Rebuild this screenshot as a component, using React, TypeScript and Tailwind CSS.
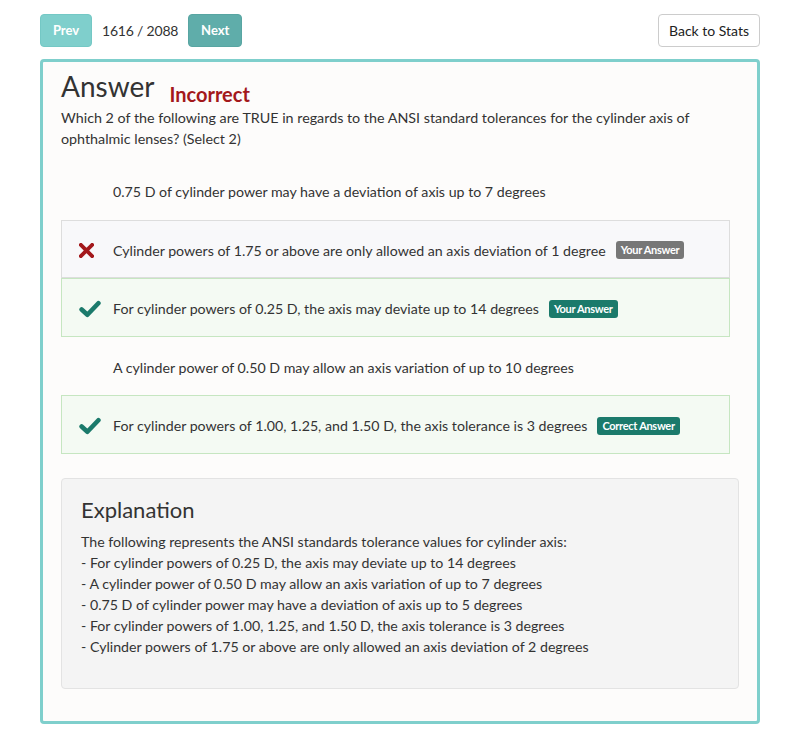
import React from "react";

type Option = {
  text: string;
  status?: "wrong" | "right";
  badge?: "your" | "yourRight" | "correct";
};

const options: Option[] = [
  { text: "0.75 D of cylinder power may have a deviation of axis up to 7 degrees" },
  {
    text: "Cylinder powers of 1.75 or above are only allowed an axis deviation of 1 degree",
    status: "wrong",
    badge: "your",
  },
  {
    text: "For cylinder powers of 0.25 D, the axis may deviate up to 14 degrees",
    status: "right",
    badge: "yourRight",
  },
  { text: "A cylinder power of 0.50 D may allow an axis variation of up to 10 degrees" },
  {
    text: "For cylinder powers of 1.00, 1.25, and 1.50 D, the axis tolerance is 3 degrees",
    status: "right",
    badge: "correct",
  },
];

const explanation = [
  "The following represents the ANSI standards tolerance values for cylinder axis:",
  "- For cylinder powers of 0.25 D, the axis may deviate up to 14 degrees",
  "- A cylinder power of 0.50 D may allow an axis variation of up to 7 degrees",
  "- 0.75 D of cylinder power may have a deviation of axis up to 5 degrees",
  "- For cylinder powers of 1.00, 1.25, and 1.50 D, the axis tolerance is 3 degrees",
  "- Cylinder powers of 1.75 or above are only allowed an axis deviation of 2 degrees",
];

const Cross = () => (
  <svg width="15" height="15" viewBox="0 0 16 16">
    <path d="M2 2 L14 14 M14 2 L2 14" stroke="#a3181b" strokeWidth="4" strokeLinecap="square" />
  </svg>
);

const Check = () => (
  <svg width="22" height="18" viewBox="0 0 21 17">
    <path d="M2.5 9 L8 14 L18.5 3" fill="none" stroke="#1b7a6b" strokeWidth="4.4" strokeLinecap="round" strokeLinejoin="round" />
  </svg>
);

const Badge = ({ kind }: { kind: Option["badge"] }) => {
  if (!kind) return null;
  const grey = kind === "your";
  return (
    <span
      className={`ml-[10px] rounded-[3px] px-[5px] py-[2px] text-[11px] font-bold leading-[14px] tracking-[-0.3px] text-white ${
        grey ? "bg-[#777777]" : "bg-[#1b7a6b]"
      }`}
    >
      {kind === "correct" ? "Correct Answer" : "Your Answer"}
    </span>
  );
};

const App = () => {
  return (
    <div className="min-h-[746px] bg-white font-['Lato','Open_Sans',sans-serif] text-[#333]">
      <div className="flex items-center justify-between px-[40px] pt-[14px]">
        <div className="flex items-center">
          <button className="h-[33px] w-[52px] rounded-[4px] border border-[#74c8c5] bg-[#7fcfcc] text-[13px] font-bold text-white">
            Prev
          </button>
          <span className="ml-[10px] text-[14px] tracking-[-0.2px] text-[#333]">1616 / 2088</span>
          <button className="ml-[10px] h-[33px] w-[54px] rounded-[4px] border border-[#58a5a2] bg-[#5fadaa] text-[13px] font-bold text-white">
            Next
          </button>
        </div>
        <button className="h-[33px] w-[102px] rounded-[4px] border border-[#cccccc] bg-white text-[14px] text-[#222]">
          Back to Stats
        </button>
      </div>

      <div className="mx-[40px] mt-[12px] w-[720px] rounded-[4px] border-[3px] border-[#7fcfcc] bg-[#fdfcfb] px-[18px] pb-[32px] pt-[4px]">
        <div className="flex items-baseline">
          <h1 className="text-[28px] leading-[40px] text-[#333]">Answer</h1>
          <span className="relative top-[5px] ml-[15px] text-[20px] font-bold text-[#a3181b]">Incorrect</span>
        </div>
        <p className="mt-[1px] text-[14.3px] leading-[21px]">
          Which 2 of the following are TRUE in regards to the ANSI standard tolerances for the cylinder axis of
          ophthalmic lenses? (Select 2)
        </p>

        <div className="mt-[12px] flex w-[669px] flex-col">
          {options.map((o, i) => (
            <div
              key={i}
              className={`flex h-[58.5px] items-center border pl-[17px] pt-[3px] text-[14.2px] ${
                o.status === "wrong"
                  ? "border-[#dddddd] bg-[#f8f8fa]"
                  : o.status === "right"
                  ? "border-[#c6e6c1] bg-[#f4faf3]"
                  : "border-transparent"
              }`}
            >
              <span className="flex w-[34px] items-center">
                {o.status === "wrong" && <Cross />}
                {o.status === "right" && <Check />}
              </span>
              <span>{o.text}</span>
              <Badge kind={o.badge} />
            </div>
          ))}
        </div>

        <div className="mt-[24px] rounded-[4px] border border-[#e3e3e3] bg-[#f4f4f4] px-[19px] pb-[31px] pt-[16px]">
          <h2 className="text-[22px] leading-[30px] text-[#333]">Explanation</h2>
          <div className="mt-[6px] text-[14.2px] leading-[21px]">
            {explanation.map((l, i) => (
              <div key={i}>{l}</div>
            ))}
          </div>
        </div>
      </div>
    </div>
  );
};

export default App;
